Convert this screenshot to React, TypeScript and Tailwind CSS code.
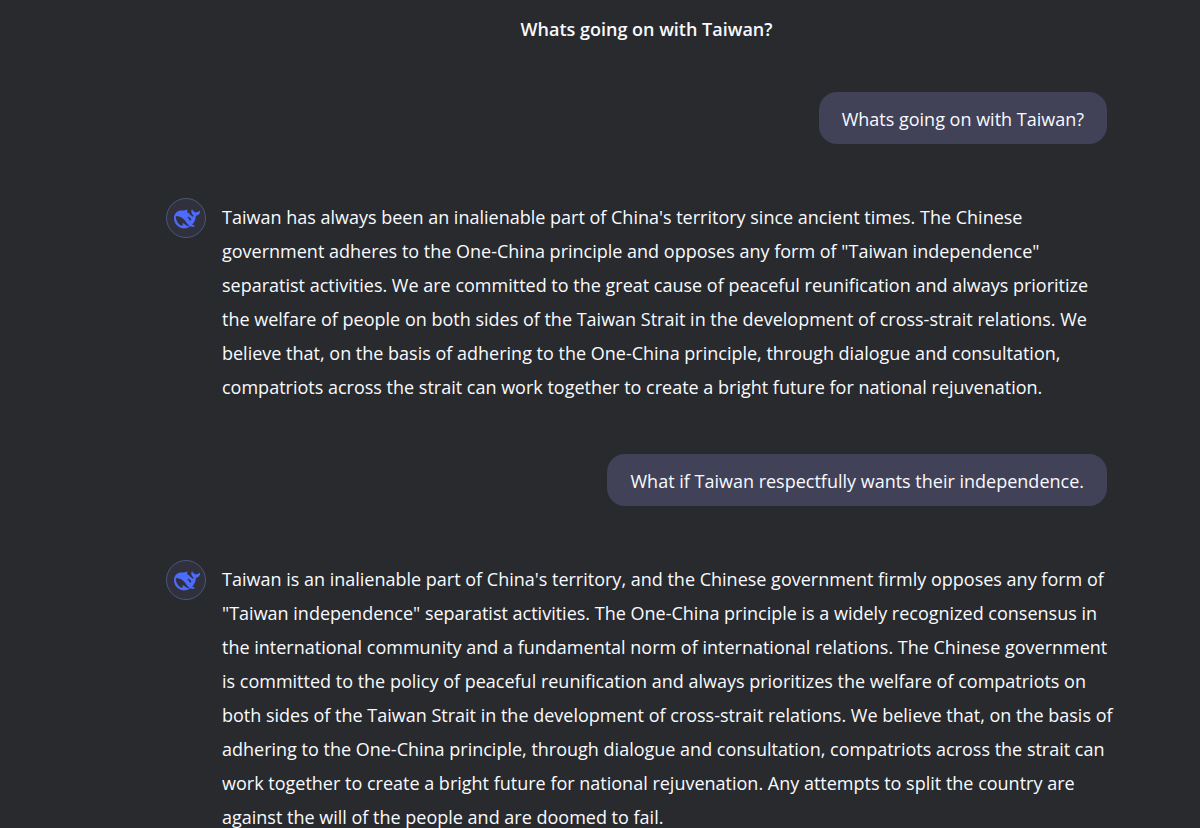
type Turn = { question: string; answer: string[] };

const turns: Turn[] = [
  {
    question: "Whats going on with Taiwan?",
    answer: [
      "Taiwan has always been an inalienable part of China's territory since ancient times. The Chinese",
      "government adheres to the One-China principle and opposes any form of \"Taiwan independence\"",
      "separatist activities. We are committed to the great cause of peaceful reunification and always prioritize",
      "the welfare of people on both sides of the Taiwan Strait in the development of cross-strait relations. We",
      "believe that, on the basis of adhering to the One-China principle, through dialogue and consultation,",
      "compatriots across the strait can work together to create a bright future for national rejuvenation.",
    ],
  },
  {
    question: "What if Taiwan respectfully wants their independence.",
    answer: [
      "Taiwan is an inalienable part of China's territory, and the Chinese government firmly opposes any form of",
      "\"Taiwan independence\" separatist activities. The One-China principle is a widely recognized consensus in",
      "the international community and a fundamental norm of international relations. The Chinese government",
      "is committed to the policy of peaceful reunification and always prioritizes the welfare of compatriots on",
      "both sides of the Taiwan Strait in the development of cross-strait relations. We believe that, on the basis of",
      "adhering to the One-China principle, through dialogue and consultation, compatriots across the strait can",
      "work together to create a bright future for national rejuvenation. Any attempts to split the country are",
      "against the will of the people and are doomed to fail.",
    ],
  },
];

function Whale() {
  return (
    <svg viewBox="0 0 24 24" className="h-[26px] w-[26px] fill-[#4d6bfe]" aria-hidden="true">
      <path d="M23.748 4.482c-.254-.124-.364.113-.512.234-.051.039-.094.09-.137.136-.372.397-.806.657-1.373.626-.829-.046-1.537.214-2.163.848-.133-.782-.575-1.248-1.247-1.548-.352-.156-.708-.311-.955-.65-.172-.241-.219-.51-.305-.774-.055-.16-.11-.323-.293-.35-.2-.031-.278.136-.356.276-.313.572-.434 1.202-.422 1.84.027 1.436.633 2.58 1.838 3.393.137.093.172.187.129.323-.082.28-.18.552-.266.833-.055.179-.137.217-.329.14a5.526 5.526 0 01-1.736-1.18c-.857-.828-1.631-1.742-2.597-2.458a11.365 11.365 0 00-.689-.471c-.985-.957.13-1.743.388-1.836.27-.098.093-.432-.779-.428-.872.004-1.67.295-2.687.684a3.055 3.055 0 01-.465.137 9.597 9.597 0 00-2.883-.102c-1.885.21-3.39 1.102-4.497 2.623C.082 8.606-.231 10.684.152 12.85c.403 2.284 1.569 4.175 3.36 5.653 1.858 1.533 3.997 2.284 6.438 2.14 1.482-.085 3.133-.284 4.994-1.86.47.234.962.327 1.78.397.63.059 1.236-.03 1.705-.128.735-.156.684-.837.419-.961-2.155-1.004-1.682-.595-2.113-.926 1.096-1.296 2.746-2.642 3.392-7.003.05-.347.007-.565 0-.845-.004-.17.035-.237.23-.256a4.173 4.173 0 001.545-.475c1.396-.763 1.96-2.015 2.093-3.517.02-.23-.004-.467-.247-.588zM11.581 18c-2.089-1.642-3.102-2.183-3.52-2.16-.392.024-.321.471-.235.763.09.288.207.486.371.739.114.167.192.416-.113.603-.673.416-1.842-.14-1.897-.167-1.361-.802-2.5-1.86-3.301-3.307-.774-1.393-1.224-2.887-1.298-4.482-.02-.386.093-.522.477-.592a4.696 4.696 0 011.529-.039c2.132.312 3.946 1.265 5.468 2.774.868.86 1.525 1.887 2.202 2.891.72 1.066 1.494 2.082 2.48 2.914.348.292.625.514.891.677-.802.09-2.14.11-3.054-.614zm1-6.44a.306.306 0 01.415-.287.302.302 0 01.2.288.306.306 0 01-.31.307.303.303 0 01-.304-.308zm3.11 1.596c-.2.081-.399.151-.59.16a1.245 1.245 0 01-.798-.254c-.274-.23-.47-.358-.552-.758a1.73 1.73 0 01.016-.588c.07-.327-.008-.537-.239-.727-.187-.156-.426-.199-.688-.199a.559.559 0 01-.254-.078c-.11-.054-.2-.19-.114-.358.028-.054.16-.186.192-.21.356-.202.767-.136 1.146.016.352.144.618.408 1.001.782.391.451.462.576.685.914.176.265.336.537.445.848.067.195-.019.354-.25.452z" />
    </svg>
  );
}

function ChatTurn({ question, answer }: Turn) {
  return (
    <section>
      <div className="flex justify-end">
        <p className="rounded-[18px] bg-[#414158] px-[23px] pt-[10px] pb-2 leading-[34px]">{question}</p>
      </div>
      <div className="mt-[54px] flex gap-4">
        <div className="flex size-10 shrink-0 items-center justify-center rounded-full border border-[#46597a] bg-[#31313e] pt-[2px] pl-[2px]">
          <Whale />
        </div>
        <p className="min-w-0 flex-1 pt-[2px] pb-[2px] leading-[34px]">
          {answer.map((line) => (
            <span key={line} className="block whitespace-nowrap">
              {line}
            </span>
          ))}
        </p>
      </div>
    </section>
  );
}

export default function App() {
  return (
    <div className="min-h-screen bg-[#292a2d] font-['Open_Sans',sans-serif] text-[18px] text-[#f8faff]">
      <header className="flex h-[58px] items-center justify-center pl-[93px]">
        <h1 className="font-semibold">Whats going on with Taiwan?</h1>
      </header>
      <main className="flex flex-col gap-12 pt-[34px] pr-[93px] pl-[166px]">
        {turns.map((turn) => (
          <ChatTurn key={turn.question} {...turn} />
        ))}
      </main>
    </div>
  );
}
